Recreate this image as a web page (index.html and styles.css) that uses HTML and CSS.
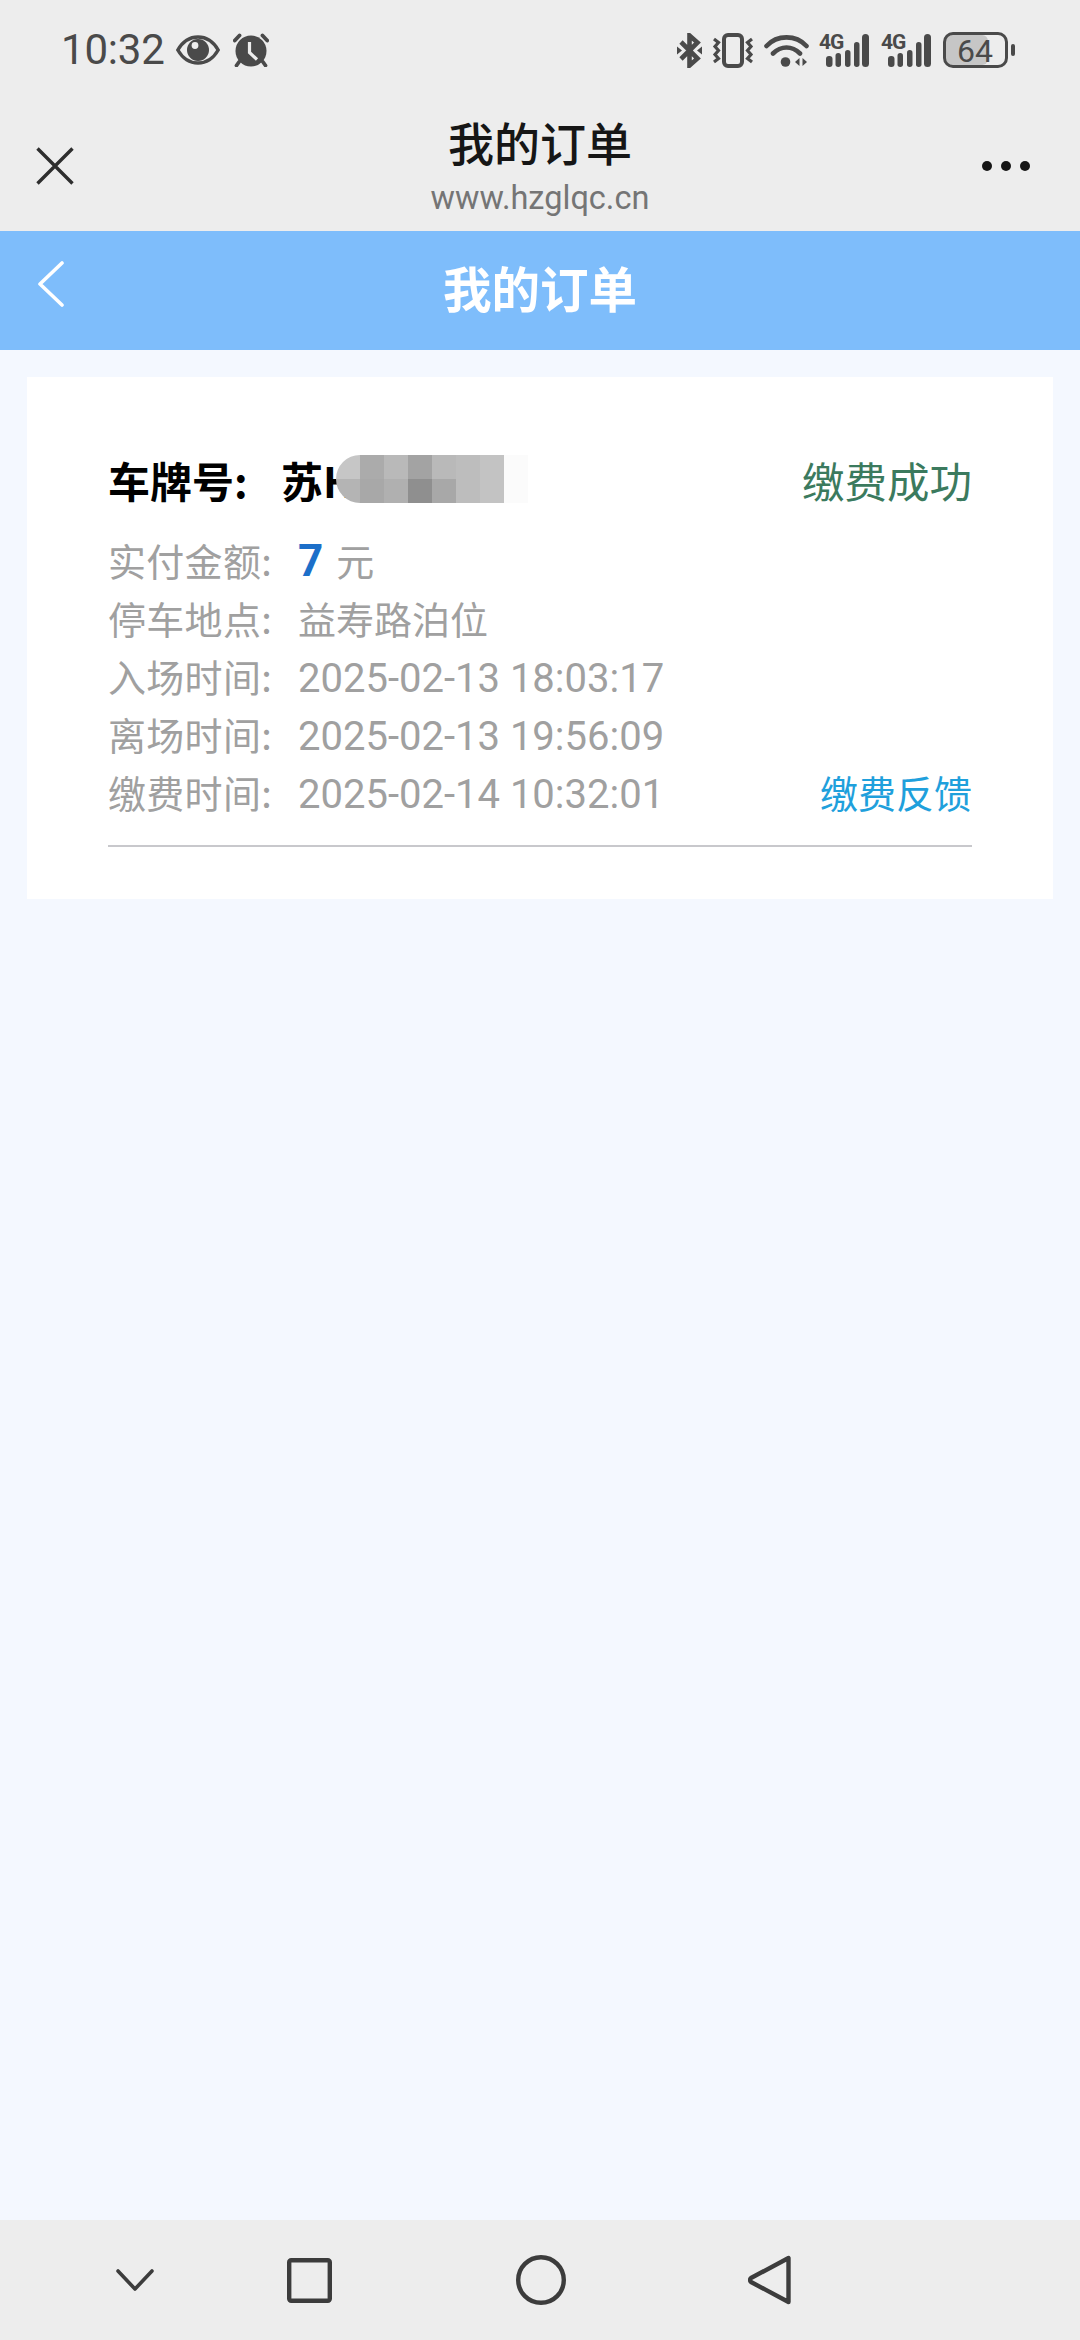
FILE: index.html
```html
<!DOCTYPE html>
<html lang="zh-CN">
<head>
<meta charset="utf-8">
<title>我的订单</title>
<link rel="stylesheet" href="styles.css">
</head>
<body>
<div class="phone">
  <header class="chrome">
    <div class="status">
      <div class="status-left">
        <span class="clock">10:32</span>
        <svg class="ic-eye" width="44" height="30" viewBox="0 0 44 30"><path d="M1.800 15C7 6 14 2 22 2s15 4 20.200 13C37 24 30 28 22 28S7 24 1.800 15Z" fill="none" stroke="#4a4a4a" stroke-width="3.400"/><circle cx="22" cy="15" r="11" fill="#4a4a4a"/><circle cx="19" cy="10.500" r="3.400" fill="#ededed"/></svg>
        <svg class="ic-alarm" width="36" height="34" viewBox="0 0 36 34"><circle cx="18" cy="18" r="15.500" fill="#4a4a4a"/><path d="M1.800 7.500 6.500 2.500M34.200 7.500 29.500 2.500M6 29 3.500 32.500M30 29 32.500 32.500" stroke="#4a4a4a" stroke-width="3.800" stroke-linecap="round" fill="none"/><path d="M16.500 9v10.500l7.500 7" stroke="#ededed" stroke-width="3.200" fill="none"/></svg>
      </div>
      <div class="status-right">
        <svg width="25" height="35" viewBox="0 0 25 35"><path d="M4 9 20.500 25.500 12.500 32.500V2.500L20.500 9.500 4 26" fill="none" stroke="#4a4a4a" stroke-width="4.600"/><path d="M0 13.500l5 4-5 4ZM25 13.500l-5 4 5 4Z" fill="#4a4a4a"/></svg>
        <svg width="42" height="35" viewBox="0 0 42 35"><rect x="12" y="2" width="18" height="31" rx="4" fill="none" stroke="#4a4a4a" stroke-width="4"/><path d="M2 6l4.500 3.500-3.500 4 3.500 4-3.500 4 3.500 4-4.500 3.500M40 6l-4.500 3.500 3.500 4-3.500 4 3.500 4-3.500 4 4.500 3.500" fill="none" stroke="#4a4a4a" stroke-width="3.200"/></svg>
        <svg width="45" height="34" viewBox="0 0 45 34"><path d="M2.500 13C13 1.500 32 1.500 42.500 13M9 20.500c8-8 19-8 27 0" fill="none" stroke="#4a4a4a" stroke-width="4.600" stroke-linecap="round"/><circle cx="21.500" cy="29" r="4.800" fill="#4a4a4a"/><path d="M35.500 25v8l-4.500-4ZM38.500 25v8l4.500-4Z" fill="#4a4a4a"/></svg>
        <div class="sig"><span class="sig-t">4G</span><svg width="50" height="35" viewBox="0 0 50 35"><rect x="7" y="23" width="6.500" height="11" rx="3"/><rect x="16.500" y="20" width="5.500" height="14" rx="2.700"/><rect x="26" y="17" width="5.500" height="17" rx="2.700"/><rect x="35" y="9" width="5.500" height="25" rx="2.700"/><rect x="43" y="1" width="7" height="33" rx="3.500"/></svg></div>
        <div class="sig"><span class="sig-t">4G</span><svg width="50" height="35" viewBox="0 0 50 35"><rect x="7" y="23" width="6.500" height="11" rx="3"/><rect x="16.500" y="20" width="5.500" height="14" rx="2.700"/><rect x="26" y="17" width="5.500" height="17" rx="2.700"/><rect x="35" y="9" width="5.500" height="25" rx="2.700"/><rect x="43" y="1" width="7" height="33" rx="3.500"/></svg></div>
        <svg class="battery" width="72" height="36" viewBox="0 0 72 36"><rect x="3" y="3" width="42" height="30" rx="6" fill="#c6c6c6"/><rect x="1.500" y="1.500" width="62" height="33" rx="8.500" fill="none" stroke="#4a4a4a" stroke-width="3"/><rect x="68" y="12" width="4" height="12" rx="2" fill="#4a4a4a"/><text class="bat-t" x="32" y="29.500">64</text></svg>
      </div>
    </div>
    <div class="titlebar">
      <div class="side"><svg class="ic-close" width="38" height="38" viewBox="0 0 38 38"><path d="M1.500 1.500l35 35M36.500 1.500l-35 35" stroke="#2e2e2e" stroke-width="3.400" fill="none"/></svg></div>
      <div class="titles">
        <div class="title">我的订单</div>
        <div class="url">www.hzglqc.cn</div>
      </div>
      <div class="side side-end"><div class="dots"><i></i><i></i><i></i></div></div>
    </div>
  </header>

  <div class="appbar">
    <svg class="ic-back" width="28" height="46" viewBox="0 0 28 46"><path d="M25 2 3 23l22 21" stroke="#fff" stroke-width="3.600" stroke-linecap="round" stroke-linejoin="round" fill="none"/></svg>
    <h1 class="appbar-title">我的订单</h1>
  </div>

  <main class="content">
    <section class="card">
      <div class="plate-row">
        <div class="plate">
          <span class="plate-label">车牌号:</span><span class="plate-no">苏H</span>
          <div class="mosaic">
            <i class="m0 tl"></i><i class="m1"></i><i class="m3"></i><i class="m4"></i><i class="m3"></i><i class="m5"></i><i class="m6"></i><i class="m7"></i>
            <i class="m12 bl"></i><i class="m9"></i><i class="m2"></i><i class="m11"></i><i class="m9"></i><i class="m5"></i><i class="m6"></i><i class="m7"></i>
          </div>
        </div>
        <span class="state">缴费成功</span>
      </div>
      <div class="row"><span class="label">实付金额:</span><span class="amount">7</span><span class="unit">元</span></div>
      <div class="row"><span class="label">停车地点:</span><span class="value">益寿路泊位</span></div>
      <div class="row"><span class="label">入场时间:</span><span class="value num">2025-02-13 18:03:17</span></div>
      <div class="row"><span class="label">离场时间:</span><span class="value num">2025-02-13 19:56:09</span></div>
      <div class="row"><span class="label">缴费时间:</span><span class="value num">2025-02-14 10:32:01</span><span class="feedback">缴费反馈</span></div>
      <div class="divider"></div>
    </section>
  </main>

  <nav class="navbar">
    <svg width="38" height="22" viewBox="0 0 38 22"><path d="M2 2l17 18L36 2" stroke="#3c3c3c" stroke-width="3.600" stroke-linecap="round" stroke-linejoin="round" fill="none"/></svg>
    <svg width="45" height="45" viewBox="0 0 45 45"><rect x="2.200" y="2.200" width="40.600" height="40.600" rx="2" stroke="#3c3c3c" stroke-width="4.400" fill="none"/></svg>
    <svg width="50" height="50" viewBox="0 0 50 50"><circle cx="25" cy="25" r="22.800" stroke="#3c3c3c" stroke-width="4.400" fill="none"/></svg>
    <svg width="43" height="50" viewBox="0 0 43 50"><path d="M40.500 3v44L3 27q-2-2 0-4Z" stroke="#3c3c3c" stroke-width="4.400" stroke-linejoin="round" fill="none"/></svg>
  </nav>
</div>
</body>
</html>
```

FILE: styles.css
```css
* { box-sizing: border-box; }
html, body { margin: 0; padding: 0; }
body {
  width: 1080px;
  height: 2340px;
  overflow: hidden;
  font-family: "Noto Sans CJK SC", "Noto Sans", sans-serif;
  background: #f4f8ff;
}
.phone { display: flex; flex-direction: column; height: 2340px; }

.chrome { background: #ededed; height: 231px; flex: none; }
.status {
  height: 100px;
  display: flex;
  justify-content: space-between;
  align-items: center;
  padding: 0 65px 0 61px;
}
.status-left { display: flex; align-items: center; }
.clock {
  font-family: Roboto, sans-serif;
  font-size: 42px;
  color: #4a4a4a;
  letter-spacing: -0.2px;
  line-height: 50px;
}
.ic-eye { margin-left: 11px; }
.ic-alarm { margin-left: 13px; }
.status-right { display: flex; align-items: center; gap: 10px; }
.sig { position: relative; width: 50px; height: 35px; margin-right: 2px; }
.sig svg { display: block; }
.sig rect { fill: #4a4a4a; }
.sig-t {
  position: absolute;
  left: 0;
  top: -1px;
  font-family: Roboto, sans-serif;
  font-weight: 700;
  font-size: 21px;
  line-height: 20px;
  color: #4a4a4a;
  letter-spacing: -1px;
}
.bat-t {
  font-family: Roboto, sans-serif;
  font-size: 32px;
  fill: #4a4a4a;
  text-anchor: middle;
}

.titlebar {
  height: 131px;
  display: flex;
  align-items: flex-start;
  padding: 0 36px;
}
.side { flex: 1; display: flex; }
.side-end { justify-content: flex-end; }
.ic-close { margin-top: 47px; flex: none; }
.titles { display: flex; flex-direction: column; align-items: center; padding-top: 13px; }
.title { font-size: 46px; font-weight: 500; line-height: 56px; color: #161616; }
.url {
  font-family: Roboto, sans-serif;
  font-size: 32.500px;
  line-height: 38px;
  margin-top: 10px;
  color: #757575;
}
.dots { display: flex; gap: 9px; margin: 61px 14px 0 0; }
.dots i { width: 10px; height: 10px; border-radius: 50%; background: #161616; display: block; }

.appbar {
  position: relative;
  height: 119px;
  flex: none;
  background: #7ebdfb;
  display: flex;
  align-items: center;
  justify-content: center;
  padding-bottom: 8px;
}
.ic-back { position: absolute; left: 37px; top: 30px; }
.appbar-title { margin: 0; font-size: 48.500px; font-weight: 700; color: #fff; line-height: 60px; }

.content { flex: 1; padding: 27px 27px 0; }
.card { background: #fff; padding: 74px 81px 52px; }
.plate-row {
  display: flex;
  justify-content: space-between;
  align-items: center;
  height: 58px;
  margin-bottom: 22px;
}
.plate { position: relative; display: flex; align-items: center; width: 420px; height: 58px; }
.plate-label { width: 173px; font-size: 42px; font-weight: 700; color: #000; line-height: 58px; }
.plate-no { font-size: 42px; font-weight: 700; color: #000; line-height: 58px; }
.mosaic {
  position: absolute;
  left: 228px;
  top: 4px;
  display: grid;
  grid-template-columns: repeat(8, 24px);
  grid-auto-rows: 24px;
}
.mosaic i { display: block; }
.tl { border-radius: 24px 0 0 0; }
.bl { border-radius: 0 0 0 24px; }
.m0 { background: #c6c6c6; }
.m1 { background: #ababab; }
.m2 { background: #b0b0b0; }
.m3 { background: #b9b9b9; }
.m4 { background: #a3a3a3; }
.m5 { background: #bdbdbd; }
.m6 { background: #c3c3c3; }
.m7 { background: #fbfbfb; }
.m9 { background: #a8a8a8; }
.m11 { background: #8f8f8f; }
.m12 { background: #b4b4b4; }
.state { font-size: 42.500px; color: #3b7a5e; line-height: 58px; }

.row {
  display: flex;
  align-items: baseline;
  height: 58px;
  font-size: 38px;
  color: #a0a0a0;
  line-height: 58px;
}
.label { width: 190px; flex: none; letter-spacing: 0.3px; }
.value.num { font-family: Roboto, "Noto Sans CJK SC", sans-serif; font-size: 40px; }
.amount {
  font-family: Roboto, sans-serif;
  font-weight: 700;
  font-size: 44px;
  color: #1c6fc9;
  margin-right: 13px;
}
.feedback { margin-left: auto; color: #1fa0dc; }
.divider { height: 2px; margin-top: 24px; background: #c8c8cc; }

.navbar {
  flex: none;
  height: 120px;
  background: #ededed;
  display: flex;
  align-items: center;
  padding-left: 116px;
}
.navbar svg:nth-child(2) { margin-left: 133px; }
.navbar svg:nth-child(3) { margin-left: 184px; }
.navbar svg:nth-child(4) { margin-left: 182px; }
```
